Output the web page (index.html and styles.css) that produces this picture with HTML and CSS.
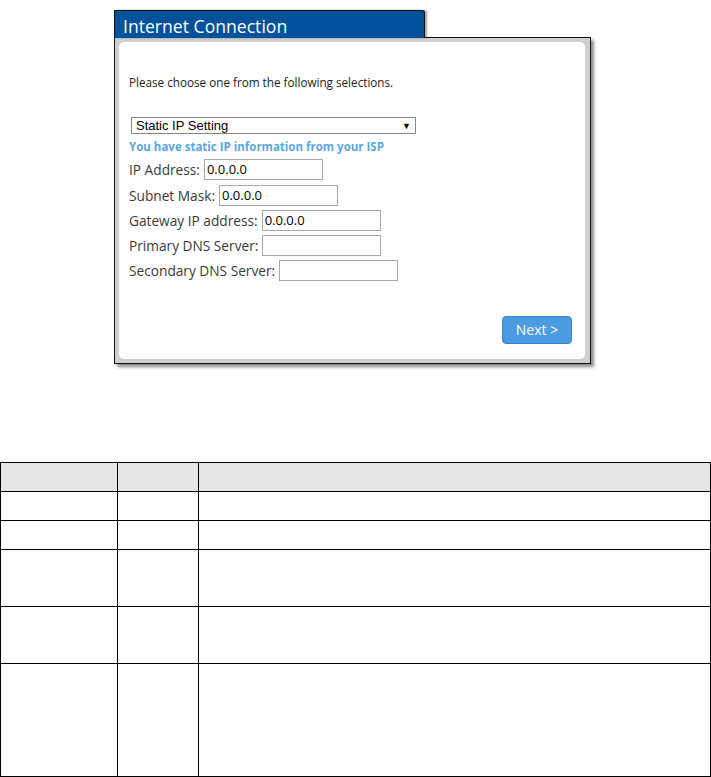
FILE: index.html
```html
<!DOCTYPE html>
<html>
<head>
<meta charset="utf-8">
<link rel="stylesheet" href="styles.css">
</head>
<body>
<div class="panel">
  <div class="tab">Internet Connection</div>
  <div class="frame">
    <div class="content">
      <p class="intro">Please choose one from the following selections.</p>
      <div class="select"><span>Static IP Setting</span><span class="arrow">&#9660;</span></div>
      <p class="hint">You have static IP information from your ISP</p>
      <div class="row"><span class="label">IP Address:</span><span class="input">0.0.0.0</span></div>
      <div class="row"><span class="label">Subnet Mask:</span><span class="input">0.0.0.0</span></div>
      <div class="row"><span class="label">Gateway IP address:</span><span class="input">0.0.0.0</span></div>
      <div class="row"><span class="label">Primary DNS Server:</span><span class="input"></span></div>
      <div class="row"><span class="label">Secondary DNS Server:</span><span class="input"></span></div>
      <div class="actions"><span class="btn">Next &gt;</span></div>
    </div>
  </div>
</div>
<table class="grid">
  <colgroup><col class="c1"><col class="c2"><col></colgroup>
  <tr class="head"><td></td><td></td><td></td></tr>
  <tr class="r1"><td></td><td></td><td></td></tr>
  <tr class="r1"><td></td><td></td><td></td></tr>
  <tr class="r2"><td></td><td></td><td></td></tr>
  <tr class="r2"><td></td><td></td><td></td></tr>
  <tr class="r4"><td></td><td></td><td></td></tr>
</table>
</body>
</html>
```

FILE: styles.css
```css
html, body { margin: 0; padding: 0; background: #fff; }
body { font-family: "Open Sans", "Noto Sans", sans-serif; color: #333; }

.panel { margin-left: 114px; padding-top: 10px; width: 477px; }

.tab {
  position: relative;
  z-index: 1;
  width: 301px;
  height: 27px;
  margin-bottom: -1px;
  background: #02529b;
  border: 1px solid #111;
  border-bottom: none;
  border-top-right-radius: 3px;
  box-shadow: 2px 0 2px rgba(0,0,0,0.35);
  color: #fff;
  font-size: 17.6px;
  line-height: 30px;
  padding-left: 8px;
  box-sizing: content-box;
}

.frame {
  border: 1px solid #111;
  background: #cfcfcf;
  padding: 4px 5px 4px 4px;
  box-shadow: 3px 3px 3px rgba(0,0,0,0.45);
}

.content {
  background: #fff;
  border-radius: 5px;
  height: 317px;
  padding: 0 13px 0 10px;
  box-sizing: border-box;
  display: flex;
  flex-direction: column;
}

.intro {
  margin: 32px 0 0;
  font-size: 11.7px;
  line-height: 16px;
  color: #222;
}

.select {
  margin: 27px 0 0 2px;
  width: 285px;
  height: 17px;
  box-sizing: border-box;
  border: 1px solid #888;
  display: flex;
  justify-content: space-between;
  align-items: center;
  padding: 0 4px;
  font-family: "Liberation Sans", Arial, sans-serif;
  font-size: 13px;
  color: #000;
}
.arrow { font-size: 9px; }

.hint {
  margin: 5px 0 0;
  font-size: 11.5px;
  line-height: 16px;
  font-weight: bold;
  color: #5aa6e2;
}

.row {
  display: flex;
  align-items: center;
  height: 21px;
  margin-top: 4.3px;
  font-size: 13.7px;
  color: #3a3a3a;
}
.row:first-of-type { margin-top: 5px; }
.label { margin-right: 4px; white-space: nowrap; }
.input {
  width: 119px;
  height: 21px;
  box-sizing: border-box;
  border: 1px solid #a8a8a8;
  padding-left: 2px;
  font-size: 13px;
  line-height: 19px;
  color: #000;
}

.actions {
  margin-top: auto;
  margin-bottom: 15px;
  display: flex;
  justify-content: flex-end;
}
.btn {
  width: 70px;
  height: 28px;
  box-sizing: border-box;
  border: 1px solid #3a86cc;
  border-radius: 4px;
  background: #4c9be0;
  color: #fff;
  font-size: 14px;
  line-height: 26px;
  text-align: center;
}

.grid {
  margin-top: 98px;
  width: 711px;
  border-collapse: collapse;
  table-layout: fixed;
}
.grid td { border: 1px solid #000; padding: 0; }
.c1 { width: 117px; }
.c2 { width: 81px; }
.head td { background: #e5e5e5; height: 28px; }
.r1 td { height: 28px; }
.r2 td { height: 56px; }
.r4 td { height: 112px; }
```
